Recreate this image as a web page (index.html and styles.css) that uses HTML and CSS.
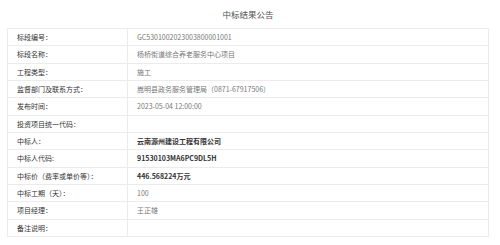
FILE: index.html
```html
<!DOCTYPE html>
<html lang="zh-CN">
<head>
<meta charset="utf-8">
<title>中标结果公告</title>
<link rel="stylesheet" href="styles.css">
</head>
<body>
<div class="page">
  <h1 class="title">中标结果公告</h1>
  <div class="table">
    <div class="row"><div class="label">标段编号：</div><div class="value">GC5301002023003800001001</div></div>
    <div class="row"><div class="label">标段名称：</div><div class="value">杨桥街道综合养老服务中心项目</div></div>
    <div class="row"><div class="label">工程类型：</div><div class="value">施工</div></div>
    <div class="row"><div class="label">监督部门及联系方式：</div><div class="value">嵩明县政务服务管理局（0871-67917506）</div></div>
    <div class="row"><div class="label">发布时间：</div><div class="value">2023-05-04 12:00:00</div></div>
    <div class="row"><div class="label">投资项目统一代码：</div><div class="value"></div></div>
    <div class="row"><div class="label">中标人：</div><div class="value strong">云南源州建设工程有限公司</div></div>
    <div class="row"><div class="label">中标人代码:</div><div class="value strong">91530103MA6PC9DL5H</div></div>
    <div class="row"><div class="label">中标价（费率或单价等）：</div><div class="value strong">446.568224万元</div></div>
    <div class="row"><div class="label">中标工期（天）：</div><div class="value">100</div></div>
    <div class="row"><div class="label">项目经理：</div><div class="value">王正雄</div></div>
    <div class="row"><div class="label">备注说明：</div><div class="value"></div></div>
  </div>
</div>
</body>
</html>
```
FILE: styles.css
```css
html, body {
  margin: 0;
  padding: 0;
  background: #fff;
}
body {
  font-family: "Noto Sans CJK SC", "Noto Sans", "Liberation Sans", sans-serif;
  color: #333;
}
.page {
  width: 482px;
  margin-left: 7px;
}
.title {
  margin: 0;
  height: 28px;
  line-height: 28px;
  font-size: 8.5px;
  font-weight: normal;
  color: #555;
  text-align: center;
}
.table {
  border: 1px solid #ebebeb;
  border-top: none;
}
.row {
  display: grid;
  grid-template-columns: 120px 1fr;
  height: 16.35px;
  border-top: 1px solid #ebebeb;
  font-size: 7px;
  line-height: 16.35px;
}
.label {
  padding-left: 9px;
  border-right: 1px solid #ebebeb;
  color: #333;
  white-space: nowrap;
}
.value {
  padding-left: 9px;
  color: #777;
  white-space: nowrap;
}
.value.strong {
  color: #333;
  font-weight: bold;
}
```
